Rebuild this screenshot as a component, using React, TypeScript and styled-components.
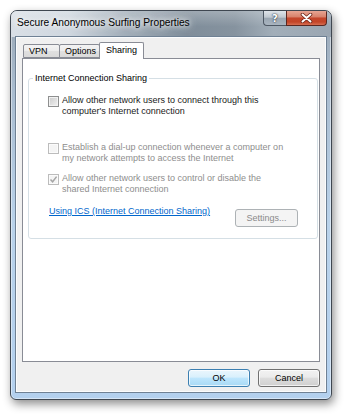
import React from 'react';
import styled, { createGlobalStyle } from 'styled-components';

const Global = createGlobalStyle`
  html, body { margin: 0; padding: 0; background: #fff; }
  body { font-family: "Liberation Sans", Arial, sans-serif; }
  * { box-sizing: border-box; }
`;

const Page = styled.div`
  width: 350px;
  height: 418px;
  padding: 10px 0 0 10px;
  overflow: hidden;
`;

const Window = styled.div`
  width: 322px;
  height: 390px;
  border: 1px solid #3f4751;
  border-radius: 7px 7px 6px 6px;
  background: linear-gradient(to bottom, #9aa7b4 0%, #a9bccf 20%, #b9d2ea 55%, #b3d0ee 100%);
  box-shadow: 2px 4px 10px rgba(0, 0, 0, 0.45), inset 0 0 0 1px rgba(255, 255, 255, 0.45);
  display: flex;
  flex-direction: column;
  overflow: hidden;
`;

const TitleBar = styled.div`
  height: 26px;
  flex: none;
  display: flex;
  align-items: flex-start;
  background:
    linear-gradient(to bottom, rgba(255, 255, 255, 0.25), rgba(255, 255, 255, 0) 60%),
    linear-gradient(to right, #d9dfe6 0%, #cfd7df 18%, #a3afba 35%, #7f8d9a 55%, #86939f 70%, #a2aeb9 82%, #9aa6b2 100%);
`;

const TitleText = styled.div`
  margin: 6px 0 0 6px;
  font-size: 10.2px;
  line-height: 12px;
  color: #000;
  white-space: nowrap;
  text-shadow: 0 0 5px rgba(255, 255, 255, 0.95), 0 0 9px rgba(255, 255, 255, 0.85), 0 0 12px rgba(255, 255, 255, 0.7);
`;

const TitleButtons = styled.div`
  margin-left: auto;
  margin-right: 4px;
  display: flex;
  height: 15px;
`;

const HelpButton = styled.div`
  width: 23px;
  height: 15px;
  border: 1px solid #4e5864;
  border-top: none;
  border-right: none;
  border-radius: 0 0 0 4px;
  background: linear-gradient(to bottom, #dfe4ea 0%, #c0c8d0 45%, #9aa6b2 50%, #aab5c0 100%);
  display: flex;
  align-items: center;
  justify-content: center;
  font-family: "DejaVu Sans", sans-serif;
  font-weight: bold;
  font-size: 10px;
  color: #fff;
  text-shadow: 0 0 2px #2b3440, 0 0 1px #2b3440;
`;

const CloseButton = styled.div`
  width: 41px;
  height: 15px;
  border: 1px solid #5b2720;
  border-top: none;
  border-radius: 0 0 4px 0;
  background: linear-gradient(to bottom, #e7a593 0%, #d8826c 42%, #c4462c 50%, #c34528 78%, #d66e52 100%);
  display: flex;
  align-items: center;
  justify-content: center;
`;

const Client = styled.div`
  flex: 1;
  margin: 0 5px 7px 5px;
  border: 1px solid #fbfcfd;
  box-shadow: 0 0 0 1px #6f8194;
  background: #f0f0f0;
  padding: 4px 5px;
  display: flex;
  flex-direction: column;
`;

const TabStrip = styled.div`
  height: 16px;
  flex: none;
  display: flex;
  align-items: flex-end;
  padding-left: 1px;
  position: relative;
  z-index: 1;
`;

const Tab = styled.div<{ $w: number; $active?: boolean }>`
  width: ${(p) => p.$w}px;
  height: ${(p) => (p.$active ? 17 : 14)}px;
  margin-left: -1px;
  margin-bottom: ${(p) => (p.$active ? -1 : 0)}px;
  &:first-child { margin-left: 0; }
  border: 1px solid #898c95;
  border-bottom: ${(p) => (p.$active ? 'none' : '1px solid #898c95')};
  border-radius: 2px 2px 0 0;
  background: ${(p) =>
    p.$active ? '#fff' : 'linear-gradient(to bottom, #f3f3f3 0%, #ececec 50%, #e0e0e0 51%, #dadada 100%)'};
  font-size: 9px;
  line-height: ${(p) => (p.$active ? 14 : 12)}px;
  padding-left: ${(p) => (p.$active ? 6 : 5)}px;
  color: #000;
  white-space: nowrap;
  position: relative;
  z-index: ${(p) => (p.$active ? 2 : 1)};
`;

const Panel = styled.div`
  height: 304px;
  flex: none;
  border: 1px solid #898c95;
  background: #fff;
  padding: 13px 1px 0 5px;
`;

const Group = styled.fieldset`
  margin: 0;
  padding: 0;
  min-width: 0;
  border: 1px solid #d5dfe5;
  border-radius: 3px;
`;

const GroupTitle = styled.legend`
  margin-left: 4px;
  padding: 0 2px;
  font-size: 9px;
  line-height: 12px;
  color: #000;
`;

const GroupBody = styled.div`
  padding: 11px 19px 11px 19px;
  display: flex;
  flex-direction: column;
`;

const CheckRow = styled.div<{ $gap: number }>`
  display: flex;
  align-items: flex-start;
  gap: 3px;
  margin-top: ${(p) => p.$gap}px;
`;

const Box = styled.span<{ $disabled?: boolean }>`
  flex: none;
  width: 11px;
  height: 11px;
  margin-top: 1px;
  border: 1px solid ${(p) => (p.$disabled ? '#bcbcbc' : '#8e8f8f')};
  background: ${(p) =>
    p.$disabled ? '#f4f4f4' : 'linear-gradient(135deg, #cbcbcb 0%, #e2e2e2 60%, #f4f4f4 100%)'};
  box-shadow: inset 0 0 0 1px ${(p) => (p.$disabled ? '#fbfbfb' : '#f2f2f2')};
  display: flex;
  align-items: center;
  justify-content: center;
`;

const Label = styled.span<{ $disabled?: boolean }>`
  font-size: 9px;
  line-height: 11px;
  color: ${(p) => (p.$disabled ? '#8e8e8e' : '#1a1a1a')};
  white-space: nowrap;
`;

const LinkRow = styled.div`
  display: flex;
  align-items: flex-start;
  margin-top: 11px;
`;

const Link = styled.a`
  padding-left: 1px;
  font-size: 9px;
  line-height: 11px;
  color: #0066cc;
  text-decoration: underline;
  white-space: nowrap;
`;

const PushButton = styled.div<{ $kind?: 'default' | 'normal' | 'disabled'; $w: number }>`
  width: ${(p) => p.$w}px;
  height: 18px;
  flex: none;
  border-radius: 3px;
  border: 1px solid
    ${(p) => (p.$kind === 'default' ? '#3c7fb1' : p.$kind === 'disabled' ? '#adb2b5' : '#707070')};
  background: ${(p) =>
    p.$kind === 'default'
      ? 'linear-gradient(to bottom, #eaf6fd 0%, #d9f0fc 45%, #bee6fd 50%, #a7d9f5 100%)'
      : p.$kind === 'disabled'
      ? '#f4f4f4'
      : 'linear-gradient(to bottom, #f2f2f2 0%, #ebebeb 45%, #dddddd 50%, #cfcfcf 100%)'};
  box-shadow: inset 0 0 0 1px
    ${(p) => (p.$kind === 'disabled' ? '#f4f4f4' : 'rgba(255,255,255,0.7)')};
  font-size: 9px;
  color: ${(p) => (p.$kind === 'disabled' ? '#8a8a8a' : '#000')};
  display: flex;
  align-items: center;
  justify-content: center;
`;

const SettingsButton = styled(PushButton)`
  margin-left: auto;
  margin-top: 3px;
`;

const ButtonRow = styled.div`
  margin-top: 7px;
  display: flex;
  justify-content: flex-end;
  gap: 8px;
`;

const CheckMark = () => (
  <svg width="9" height="9" viewBox="0 0 9 9">
    <path d="M1.5 4.5 L3.6 6.8 L7.6 1.6" fill="none" stroke="#a5a5a5" strokeWidth="1.5" />
  </svg>
);

const CloseGlyph = () => (
  <svg width="13" height="10" viewBox="0 0 13 10">
    <path d="M2.5 1.5 L10.5 8.5 M10.5 1.5 L2.5 8.5" stroke="#6b2418" strokeWidth="3.6" strokeLinecap="round" />
    <path d="M2.5 1.5 L10.5 8.5 M10.5 1.5 L2.5 8.5" stroke="#ffffff" strokeWidth="2" strokeLinecap="round" />
  </svg>
);

export default function App() {
  return (
    <Page>
      <Global />
      <Window>
        <TitleBar>
          <TitleText>Secure Anonymous Surfing Properties</TitleText>
          <TitleButtons>
            <HelpButton>?</HelpButton>
            <CloseButton>
              <CloseGlyph />
            </CloseButton>
          </TitleButtons>
        </TitleBar>
        <Client>
          <TabStrip>
            <Tab $w={37}>VPN</Tab>
            <Tab $w={41}>Options</Tab>
            <Tab $w={45} $active>
              Sharing
            </Tab>
          </TabStrip>
          <Panel>
            <Group>
              <GroupTitle>Internet Connection Sharing</GroupTitle>
              <GroupBody>
                <CheckRow $gap={0}>
                  <Box />
                  <Label>
                    Allow other network users to connect through this
                    <br />
                    computer's Internet connection
                  </Label>
                </CheckRow>
                <CheckRow $gap={25}>
                  <Box $disabled />
                  <Label $disabled>
                    Establish a dial-up connection whenever a computer on
                    <br />
                    my network attempts to access the Internet
                  </Label>
                </CheckRow>
                <CheckRow $gap={9}>
                  <Box $disabled>
                    <CheckMark />
                  </Box>
                  <Label $disabled>
                    Allow other network users to control or disable the
                    <br />
                    shared Internet connection
                  </Label>
                </CheckRow>
                <LinkRow>
                  <Link>Using ICS (Internet Connection Sharing)</Link>
                  <SettingsButton $kind="disabled" $w={63}>
                    Settings...
                  </SettingsButton>
                </LinkRow>
              </GroupBody>
            </Group>
          </Panel>
          <ButtonRow>
            <PushButton $kind="default" $w={62}>
              OK
            </PushButton>
            <PushButton $w={62}>Cancel</PushButton>
          </ButtonRow>
        </Client>
      </Window>
    </Page>
  );
}
